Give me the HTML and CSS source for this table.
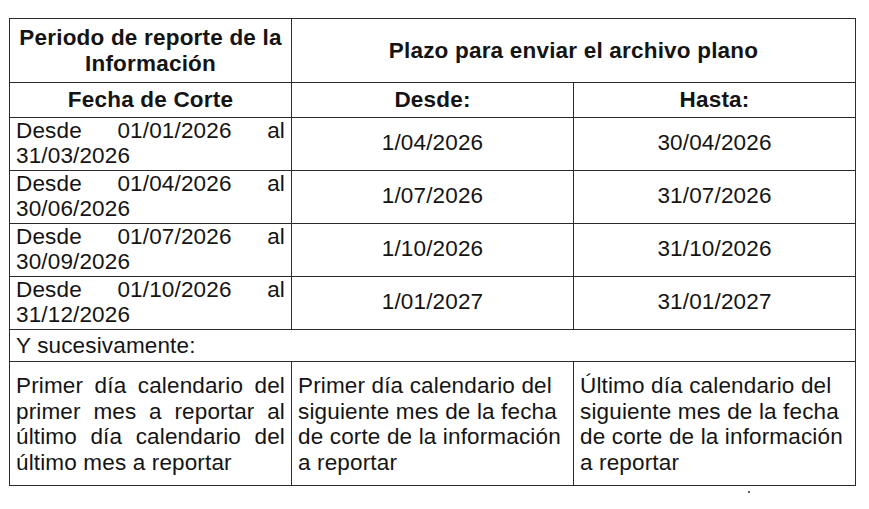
FILE: index.html
```html
<!DOCTYPE html>
<html lang="es">
<head>
<meta charset="utf-8">
<title>Plazos de reporte</title>
<link rel="stylesheet" href="styles.css">
</head>
<body>
<div class="page">
  <table class="plazos">
    <colgroup><col class="col"><col class="col"><col class="col"></colgroup>
    <thead>
      <tr class="head-main">
        <th>Periodo de reporte de la Información</th>
        <th colspan="2">Plazo para enviar el archivo plano</th>
      </tr>
      <tr class="head-sub">
        <th>Fecha de Corte</th>
        <th>Desde:</th>
        <th>Hasta:</th>
      </tr>
    </thead>
    <tbody>
      <tr class="data">
        <td class="periodo">Desde 01/01/2026 al 31/03/2026</td>
        <td>1/04/2026</td>
        <td>30/04/2026</td>
      </tr>
      <tr class="data">
        <td class="periodo">Desde 01/04/2026 al 30/06/2026</td>
        <td>1/07/2026</td>
        <td>31/07/2026</td>
      </tr>
      <tr class="data">
        <td class="periodo">Desde 01/07/2026 al 30/09/2026</td>
        <td>1/10/2026</td>
        <td>31/10/2026</td>
      </tr>
      <tr class="data">
        <td class="periodo">Desde 01/10/2026 al 31/12/2026</td>
        <td>1/01/2027</td>
        <td>31/01/2027</td>
      </tr>
      <tr class="note">
        <td colspan="3">Y sucesivamente:</td>
      </tr>
      <tr class="rule">
        <td class="justified">Primer día calendario del primer mes a reportar al último día calendario del último mes a reportar</td>
        <td>Primer día calendario del siguiente mes de la fecha de corte de la información a reportar</td>
        <td>Último día calendario del siguiente mes de la fecha de corte de la información a reportar</td>
      </tr>
    </tbody>
  </table>
  <span class="speck"></span>
</div>
</body>
</html>
```

FILE: styles.css
```css
html, body {
  margin: 0;
  padding: 0;
  background: #ffffff;
}

.page {
  position: relative;
  width: 869px;
  height: 509px;
  padding: 18px 0 0 9px;
  box-sizing: border-box;
}

.plazos {
  border-collapse: collapse;
  table-layout: fixed;
  width: 847px;
  font-family: "Liberation Sans", Arial, sans-serif;
  font-size: 22.5px;
  line-height: 25.5px;
  letter-spacing: 0.15px;
  color: #141414;
}

.plazos .col {
  width: 282px;
}

.plazos th,
.plazos td {
  border: 1px solid #2b2b2b;
  padding: 0 6px 1px;
  vertical-align: middle;
}

.plazos th {
  font-weight: bold;
  text-align: center;
  letter-spacing: 0.2px;
}

.head-main th {
  padding: 6px 6px 6px;
}

.head-sub th {
  padding: 4px 6px 4px;
}

.data td {
  text-align: center;
}

.data td.periodo {
  text-align: justify;
  padding: 0 6px 1px;
}

.note td {
  text-align: left;
  padding: 3px 6px 3px;
}

.rule td {
  text-align: left;
  vertical-align: top;
  padding: 11px 6px 10px;
}

.rule td.justified {
  text-align: justify;
}

.speck {
  position: absolute;
  left: 748px;
  top: 491px;
  width: 2px;
  height: 2px;
  background: #333;
  border-radius: 1px;
}
```
